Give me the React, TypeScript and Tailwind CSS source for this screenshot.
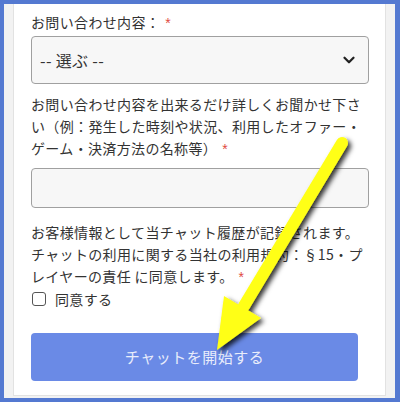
import { ChevronDown } from 'lucide-react'

const font = { fontFamily: '"Noto Sans CJK JP", "Noto Sans", sans-serif' }

function Req() {
  return <span className="ml-[5px] text-[#e04a3f] font-['Liberation_Sans'] text-[14px] leading-none">*</span>
}

function Arrow() {
  return (
    <svg className="absolute inset-0 pointer-events-none" width="400" height="402" viewBox="0 0 400 402">
      <defs>
        <filter id="sh" x="-20%" y="-20%" width="140%" height="140%">
          <feDropShadow dx="3" dy="3" stdDeviation="2.5" floodColor="#000" floodOpacity="0.8" />
        </filter>
      </defs>
      <g filter="url(#sh)">
        <line x1="342" y1="143" x2="244" y2="306" stroke="#ffff14" strokeWidth="12" strokeLinecap="round" />
        <polygon points="217,350 224,296 261,318" fill="#ffff14" />
      </g>
    </svg>
  )
}

export default function App() {
  return (
    <div className="relative w-[400px] h-[402px] bg-[#5479d1] pt-[4px] pl-[4px] pr-[5px] pb-[4px] overflow-hidden" style={font}>
      <div className="h-full bg-[#f2f2f2] px-[9px] pb-[2px]">
        <div className="h-full bg-white border border-t-0 border-[#e2e2e2] pl-[17px] pr-[16px] pt-[7px] text-[#333] text-[14px] leading-[22px] tracking-[0.35px]">
          <label className="block">
            お問い合わせ内容：<Req />
          </label>
          <div className="mt-[3px] h-[48px] w-[338px] rounded-[4px] border border-[#a0a0a0] bg-[#f7f7f7] flex items-center justify-between pl-[8px] pr-[10px]">
            <span className="text-[16px] text-[#333]">-- 選ぶ --</span>
            <ChevronDown className="w-[18px] h-[18px] text-[#222]" strokeWidth={3} />
          </div>
          <p className="mt-[9px]">
            お問い合わせ内容を出来るだけ詳しくお聞かせ下さい（例：発生した時刻や状況、利用したオファー・ゲーム・決済方法の名称等）<Req />
          </p>
          <div className="mt-[9px] h-[40px] w-[338px] rounded-[4px] border border-[#a0a0a0] bg-[#f7f7f7]" />
          <p className="mt-[13px]">
            お客様情報として当チャット履歴が記録されます。チャットの利用に関する当社の利用規約：§15・プレイヤーの責任 に同意します。<Req />
          </p>
          <label className="mt-[1px] flex items-center h-[22px]">
            <span className="ml-[1px] w-[14px] h-[14px] rounded-[3px] border border-[#555] bg-white" />
            <span className="ml-[9px]">同意する</span>
          </label>
          <button className="mt-[23px] h-[48px] w-[327px] rounded-[4px] bg-[#6a8ae6] text-[#e9edfb] text-[15px] tracking-[0.5px] flex items-center justify-center">
            チャットを開始する
          </button>
        </div>
      </div>
      <Arrow />
    </div>
  )
}
